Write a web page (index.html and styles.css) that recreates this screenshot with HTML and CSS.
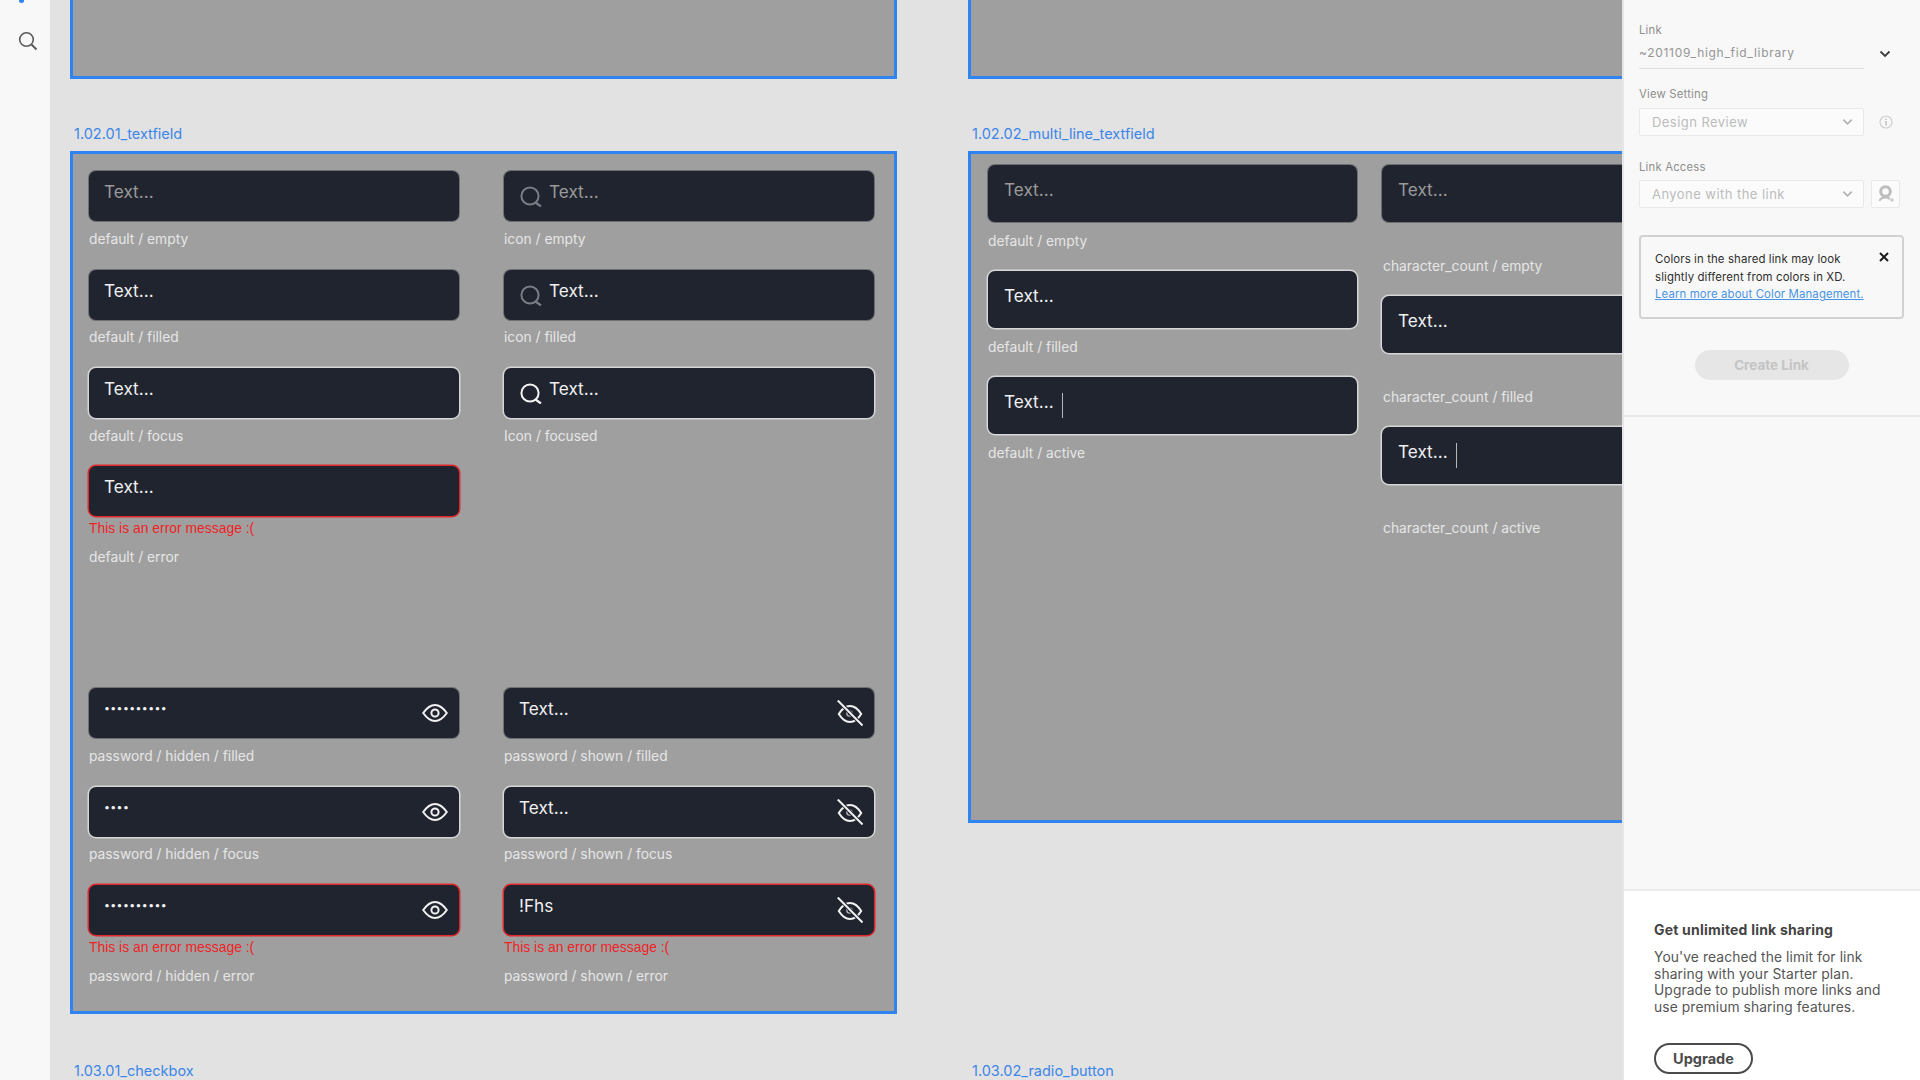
FILE: index.html
```html
<!DOCTYPE html>
<html lang="en">
<head>
  <meta charset="UTF-8" />
  <title>Share for review</title>
  <link rel="stylesheet" href="styles.css">
</head>
<body>
  <svg class="sprites" width="0" height="0">
    <symbol id="i-search" viewBox="0 0 22 22">
      <circle cx="10" cy="11" r="8.6" fill="none" stroke="currentColor" stroke-width="2"/>
      <path d="M15.5 17.5 L21 21.5" fill="none" stroke="currentColor" stroke-width="2.2"/>
    </symbol>
    <symbol id="i-eye" viewBox="0 0 26 26">
      <path d="M1.2 13 C5 7.6 8.8 5 13 5 S21 7.6 24.8 13 C21 18.4 17.2 21 13 21 S5 18.4 1.2 13Z" fill="none" stroke="currentColor" stroke-width="2"/>
      <circle cx="13" cy="13" r="3.6" fill="none" stroke="currentColor" stroke-width="2"/>
    </symbol>
    <symbol id="i-eye-off" viewBox="0 0 26 26">
      <path d="M1.8 14 C5 8.8 8.8 6 13 6 S21 8.8 24.2 14 C21 19.2 17.2 22 13 22 S5 19.2 1.8 14Z" fill="none" stroke="currentColor" stroke-width="2"/>
      <circle cx="12.5" cy="13.5" r="2.6" fill="none" stroke="currentColor" stroke-width="1.4" opacity=".7"/>
      <path d="M1 0.5 L25.5 25.5" stroke="#20242f" stroke-width="4"/>
      <path d="M0.8 0.5 L25.5 25.5" stroke="currentColor" stroke-width="2"/>
    </symbol>
    <symbol id="i-chev" viewBox="0 0 12 8">
      <path d="M1.5 1.5 L6 6 L10.5 1.5" fill="none" stroke="currentColor" stroke-width="1.8"/>
    </symbol>
  </svg>

  <div class="app">
    <nav class="rail">
      <div class="rail-tick"></div>
      <svg class="rail-search" viewBox="0 0 20 20" width="20" height="20">
        <circle cx="8.5" cy="8.5" r="6.8" fill="none" stroke="#5a5a5a" stroke-width="1.6"/>
        <path d="M13.5 13.5 L18.5 18.5" stroke="#5a5a5a" stroke-width="2"/>
      </svg>
    </nav>

    <main class="canvas">
      <div class="frame frame-top frame-top-a"></div>
      <div class="frame frame-top frame-top-b"></div>

      <section class="artboard artboard-a">
        <h3 class="ab-title">1.02.01_textfield</h3>
        <div class="frame frame-textfield">
          <div class="cell">
            <div class="field"><span class="value muted">Text...</span></div>
            <p class="caption">default / empty</p>
          </div>
          <div class="cell">
            <div class="field has-icon"><svg class="icon-search dim"><use href="#i-search"/></svg><span class="value muted">Text...</span></div>
            <p class="caption">icon / empty</p>
          </div>
          <div class="cell">
            <div class="field"><span class="value">Text...</span></div>
            <p class="caption">default / filled</p>
          </div>
          <div class="cell">
            <div class="field has-icon"><svg class="icon-search dim"><use href="#i-search"/></svg><span class="value">Text...</span></div>
            <p class="caption">icon / filled</p>
          </div>
          <div class="cell">
            <div class="field focus"><span class="value">Text...</span></div>
            <p class="caption">default / focus</p>
          </div>
          <div class="cell">
            <div class="field focus has-icon"><svg class="icon-search"><use href="#i-search"/></svg><span class="value">Text...</span></div>
            <p class="caption">Icon / focused</p>
          </div>
          <div class="cell">
            <div class="field error"><span class="value">Text...</span></div>
            <p class="error-msg">This is an error message :(</p>
            <p class="caption after-error">default / error</p>
          </div>
          <div class="cell"></div>
          <div class="cell">
            <div class="field"><span class="value dots">••••••••••</span><svg class="icon-eye"><use href="#i-eye"/></svg></div>
            <p class="caption">password / hidden / filled</p>
          </div>
          <div class="cell">
            <div class="field"><span class="value">Text...</span><svg class="icon-eye"><use href="#i-eye-off"/></svg></div>
            <p class="caption">password / shown / filled</p>
          </div>
          <div class="cell">
            <div class="field focus"><span class="value dots">••••</span><svg class="icon-eye"><use href="#i-eye"/></svg></div>
            <p class="caption">password / hidden / focus</p>
          </div>
          <div class="cell">
            <div class="field focus"><span class="value">Text...</span><svg class="icon-eye"><use href="#i-eye-off"/></svg></div>
            <p class="caption">password / shown / focus</p>
          </div>
          <div class="cell">
            <div class="field error"><span class="value dots">••••••••••</span><svg class="icon-eye"><use href="#i-eye"/></svg></div>
            <p class="error-msg">This is an error message :(</p>
            <p class="caption after-error">password / hidden / error</p>
          </div>
          <div class="cell">
            <div class="field error"><span class="value">!Fhs</span><svg class="icon-eye"><use href="#i-eye-off"/></svg></div>
            <p class="error-msg">This is an error message :(</p>
            <p class="caption after-error">password / shown / error</p>
          </div>
        </div>
      </section>

      <section class="artboard artboard-b">
        <h3 class="ab-title">1.02.02_multi_line_textfield</h3>
        <div class="frame frame-multi">
          <div class="multi-col">
            <div class="multi-cell">
              <div class="field tall"><span class="value muted">Text...</span></div>
              <p class="caption">default / empty</p>
            </div>
            <div class="multi-cell">
              <div class="field tall focus"><span class="value">Text...</span></div>
              <p class="caption">default / filled</p>
            </div>
            <div class="multi-cell">
              <div class="field tall focus"><span class="value">Text...</span><span class="cursor"></span></div>
              <p class="caption">default / active</p>
            </div>
          </div>
          <div class="multi-col count">
            <div class="multi-cell">
              <div class="field tall"><span class="value muted">Text...</span></div>
              <p class="caption">character_count / empty</p>
            </div>
            <div class="multi-cell">
              <div class="field tall focus"><span class="value">Text...</span></div>
              <p class="caption">character_count / filled</p>
            </div>
            <div class="multi-cell">
              <div class="field tall focus"><span class="value">Text...</span><span class="cursor"></span></div>
              <p class="caption">character_count / active</p>
            </div>
          </div>
        </div>
      </section>

      <section class="artboard artboard-c"><h3 class="ab-title">1.03.01_checkbox</h3></section>
      <section class="artboard artboard-d"><h3 class="ab-title">1.03.02_radio_button</h3></section>
    </main>

    <aside class="panel">
      <div class="panel-form">
        <div class="form-label first">Link</div>
        <div class="link-row">
          <div class="link-value">~201109_high_fid_library</div>
          <svg class="link-chev"><use href="#i-chev"/></svg>
        </div>

        <div class="form-label view">View Setting</div>
        <div class="select-row">
          <div class="select">Design Review<svg class="select-chev"><use href="#i-chev"/></svg></div>
          <svg class="info" viewBox="0 0 14 14" width="14" height="14">
            <circle cx="7" cy="7" r="6" fill="none" stroke="#cfcfcf" stroke-width="1.2"/>
            <path d="M7 6 V10.5 M7 3.4 V5" stroke="#c4c4c4" stroke-width="1.6"/>
          </svg>
        </div>

        <div class="form-label access">Link Access</div>
        <div class="select-row tight">
          <div class="select">Anyone with the link<svg class="select-chev"><use href="#i-chev"/></svg></div>
          <div class="invite">
            <svg viewBox="0 0 18 18" width="18" height="18">
              <circle cx="8.5" cy="6.5" r="4.8" fill="none" stroke="#bdbdbd" stroke-width="3"/>
              <path d="M2.5 16 C3.5 13 6 12.5 8.5 12.5 S12 13 13 14" fill="none" stroke="#bdbdbd" stroke-width="2"/>
              <path d="M15 13 V17 M13 15 H17" stroke="#bdbdbd" stroke-width="1"/>
            </svg>
          </div>
        </div>

        <div class="note">
          <p>Colors in the shared link may look slightly different from colors in XD.</p>
          <a class="note-link">Learn more about Color Management.</a>
          <svg class="note-close" viewBox="0 0 10 10" width="10" height="10">
            <path d="M1 1 L9 9 M9 1 L1 9" stroke="#1c1c1c" stroke-width="2"/>
          </svg>
        </div>

        <div class="create-wrap"><button class="create-btn">Create Link</button></div>
      </div>

      <div class="panel-spacer"></div>

      <div class="upsell">
        <h4>Get unlimited link sharing</h4>
        <p>You've reached the limit for link sharing with your Starter plan. Upgrade to publish more links and use premium sharing features.</p>
        <button class="upgrade-btn">Upgrade</button>
      </div>
    </aside>
  </div>
</body>
</html>
```

FILE: styles.css
```css
* {
  box-sizing: border-box;
}

html, body {
  margin: 0;
  height: 1080px;
  overflow: hidden;
}

body {
  font-family: Inter, "Liberation Sans", sans-serif;
}

p, h3, h4 {
  margin: 0;
}

.sprites {
  position: absolute;
}

.app {
  display: flex;
  height: 1080px;
}

/* left rail */
.rail {
  width: 50px;
  flex: none;
  background-color: #f8f8f8;
}

.rail-tick {
  width: 5px;
  height: 3px;
  margin-left: 19px;
  background-color: #2f80f5;
  border-radius: 0 0 3px 3px;
}

.rail-search {
  display: block;
  margin: 28px 0 0 18px;
}

/* canvas: artboards sit on a free surface */
.canvas {
  position: relative;
  flex: 1;
  overflow: hidden;
  background-color: #e2e2e2;
}

.frame {
  background-color: #9f9f9f;
  border: 3px solid #3084f2;
}

.frame-top {
  position: absolute;
  top: -100px;
  height: 179px;
}

.frame-top-a {
  left: 20px;
  width: 827px;
}

.frame-top-b {
  left: 918px;
  width: 800px;
}

.artboard {
  position: absolute;
  top: 124px;
}

.artboard-a {
  left: 20px;
  width: 827px;
}

.artboard-b {
  left: 918px;
  width: 800px;
}

.artboard-c {
  left: 20px;
  top: 1061px;
}

.artboard-d {
  left: 918px;
  top: 1061px;
}

.ab-title {
  height: 17px;
  margin-bottom: 10px;
  padding-left: 4px;
  font-size: 14.5px;
  line-height: 20px;
  font-weight: 400;
  color: #3b86e8;
}

.frame-textfield {
  display: grid;
  grid-template-columns: 370px 370px;
  grid-template-rows: 98.5px 98.5px 98px 222px 98.5px 98.5px auto;
  column-gap: 45px;
  height: 863px;
  padding: 17px 0 0 16px;
}

.frame-multi {
  display: flex;
  gap: 25px;
  height: 672px;
  padding: 11px 0 0 17px;
}

.multi-col {
  width: 369px;
  flex: none;
}

.multi-cell {
  height: 106px;
}

.count .multi-cell {
  height: 131px;
}

.multi-cell .caption {
  margin-top: 10.5px;
}

.count .multi-cell .caption {
  margin-top: 36px;
  padding-left: 1px;
}

/* text fields */
.field {
  display: flex;
  align-items: flex-start;
  width: 370px;
  height: 50px;
  padding: 0 11px 0 15px;
  background-color: #20242f;
  border-radius: 7px;
  box-shadow: 0 0 0 1px #6e6f73;
  color: #f0f0f0;
}

.field.focus {
  box-shadow: 0 0 0 1.5px #d6d6d6;
}

.field.error {
  box-shadow: 0 0 0 1.5px #e2282c;
}

.field.tall {
  width: 369px;
  height: 57px;
  padding-left: 16px;
}

.field.has-icon {
  padding-left: 16px;
}

.value {
  margin-top: 10px;
  font-size: 17.2px;
  line-height: 22px;
  white-space: nowrap;
}

.tall .value {
  margin-top: 14px;
}

.muted {
  color: #9a9a9a;
}

.dots {
  font-size: 10.5px;
  letter-spacing: 0.4px;
}

.cursor {
  width: 1px;
  height: 25px;
  margin: 16px 0 0 8px;
  background-color: #b8b8b8;
}

.icon-search {
  width: 22px;
  height: 22px;
  margin: 14px 7px 0 0;
  color: #f4f4f4;
}

.icon-search.dim {
  color: #7a7d84;
}

.icon-eye {
  width: 26px;
  height: 26px;
  margin: 12px 0 0 auto;
  color: #f2f2f2;
}

.caption {
  margin-top: 9.5px;
  font-size: 13.8px;
  line-height: 17px;
  color: #e6e6e6;
}

.error-msg {
  margin-top: 4px;
  font-family: "Liberation Sans", Arial, sans-serif;
  font-size: 13.9px;
  line-height: 17px;
  color: #ef2326;
}

.caption.after-error {
  margin-top: 12px;
}

/* share panel */
.panel {
  display: flex;
  flex-direction: column;
  width: 298px;
  flex: none;
  border-left: 2px solid #e6e6e6;
  background-color: #f8f8f8;
}

.panel-form {
  height: 417px;
  padding: 22px 16px 0 15px;
  border-bottom: 2px solid #e8e8e8;
}

.form-label {
  font-size: 11.3px;
  line-height: 16px;
  letter-spacing: 0.2px;
  color: #8f8f8f;
}

.form-label.view {
  margin-top: 17px;
}

.form-label.access {
  margin-top: 23px;
}

.link-row {
  display: flex;
  margin-top: 7px;
}

.link-value {
  width: 225px;
  height: 24px;
  font-size: 12px;
  line-height: 16px;
  letter-spacing: 0.7px;
  color: #959595;
  border-bottom: 1px solid #dedede;
}

.link-chev {
  width: 12px;
  height: 8px;
  margin: 5px 0 0 15px;
  color: #3c3c3c;
}

.select-row {
  display: flex;
  align-items: center;
  margin-top: 6px;
}

.select-row.tight {
  margin-top: 5px;
}

.select {
  display: flex;
  align-items: center;
  justify-content: space-between;
  width: 225px;
  height: 28px;
  padding: 0 10px 0 12px;
  font-size: 13px;
  letter-spacing: 0.45px;
  color: #bcbcbc;
  background-color: #fbfbfb;
  border: 1px solid #e9e9e9;
  border-radius: 2px;
}

.select-chev {
  width: 11px;
  height: 8px;
  color: #b0b0b0;
}

.info {
  margin-left: 15px;
}

.invite {
  display: flex;
  align-items: center;
  justify-content: center;
  width: 29px;
  height: 28px;
  margin-left: 7px;
  background-color: #fbfbfb;
  border: 1px solid #e9e9e9;
  border-radius: 2px;
}

.note {
  position: relative;
  width: 265px;
  height: 84px;
  margin-top: 27px;
  padding: 14px 30px 0 14px;
  font-size: 11.4px;
  line-height: 17.7px;
  letter-spacing: 0.12px;
  color: #2e2e2e;
  border: 2px solid #d2d2d2;
  border-radius: 4px;
}

.note-link {
  white-space: nowrap;
  color: #4a94e4;
  text-decoration: underline;
}

.note-close {
  position: absolute;
  top: 15px;
  right: 13px;
}

.create-wrap {
  display: flex;
  justify-content: center;
  margin-top: 31px;
}

.create-btn {
  width: 154px;
  height: 30px;
  padding: 0;
  border: none;
  border-radius: 16px;
  font-family: inherit;
  font-size: 13.5px;
  font-weight: 700;
  color: #c4c4c4;
  background-color: #e6e6e6;
}

.panel-spacer {
  flex: 1;
}

.upsell {
  height: 191px;
  padding: 31px 35px 0 30px;
  background-color: #fff;
  border-top: 2px solid #ececec;
  color: #555;
}

.upsell h4 {
  font-size: 14px;
  line-height: 16px;
  font-weight: 700;
  letter-spacing: 0.2px;
  color: #444;
}

.upsell p {
  margin-top: 11px;
  font-size: 13.8px;
  line-height: 16.6px;
  letter-spacing: 0.1px;
}

.upgrade-btn {
  display: block;
  width: 99px;
  height: 31px;
  margin-top: 28px;
  padding: 0;
  border: 2.5px solid #4b4b4b;
  border-radius: 16px;
  background-color: #fff;
  font-family: inherit;
  font-size: 14.5px;
  font-weight: 700;
  color: #4b4b4b;
}
```
